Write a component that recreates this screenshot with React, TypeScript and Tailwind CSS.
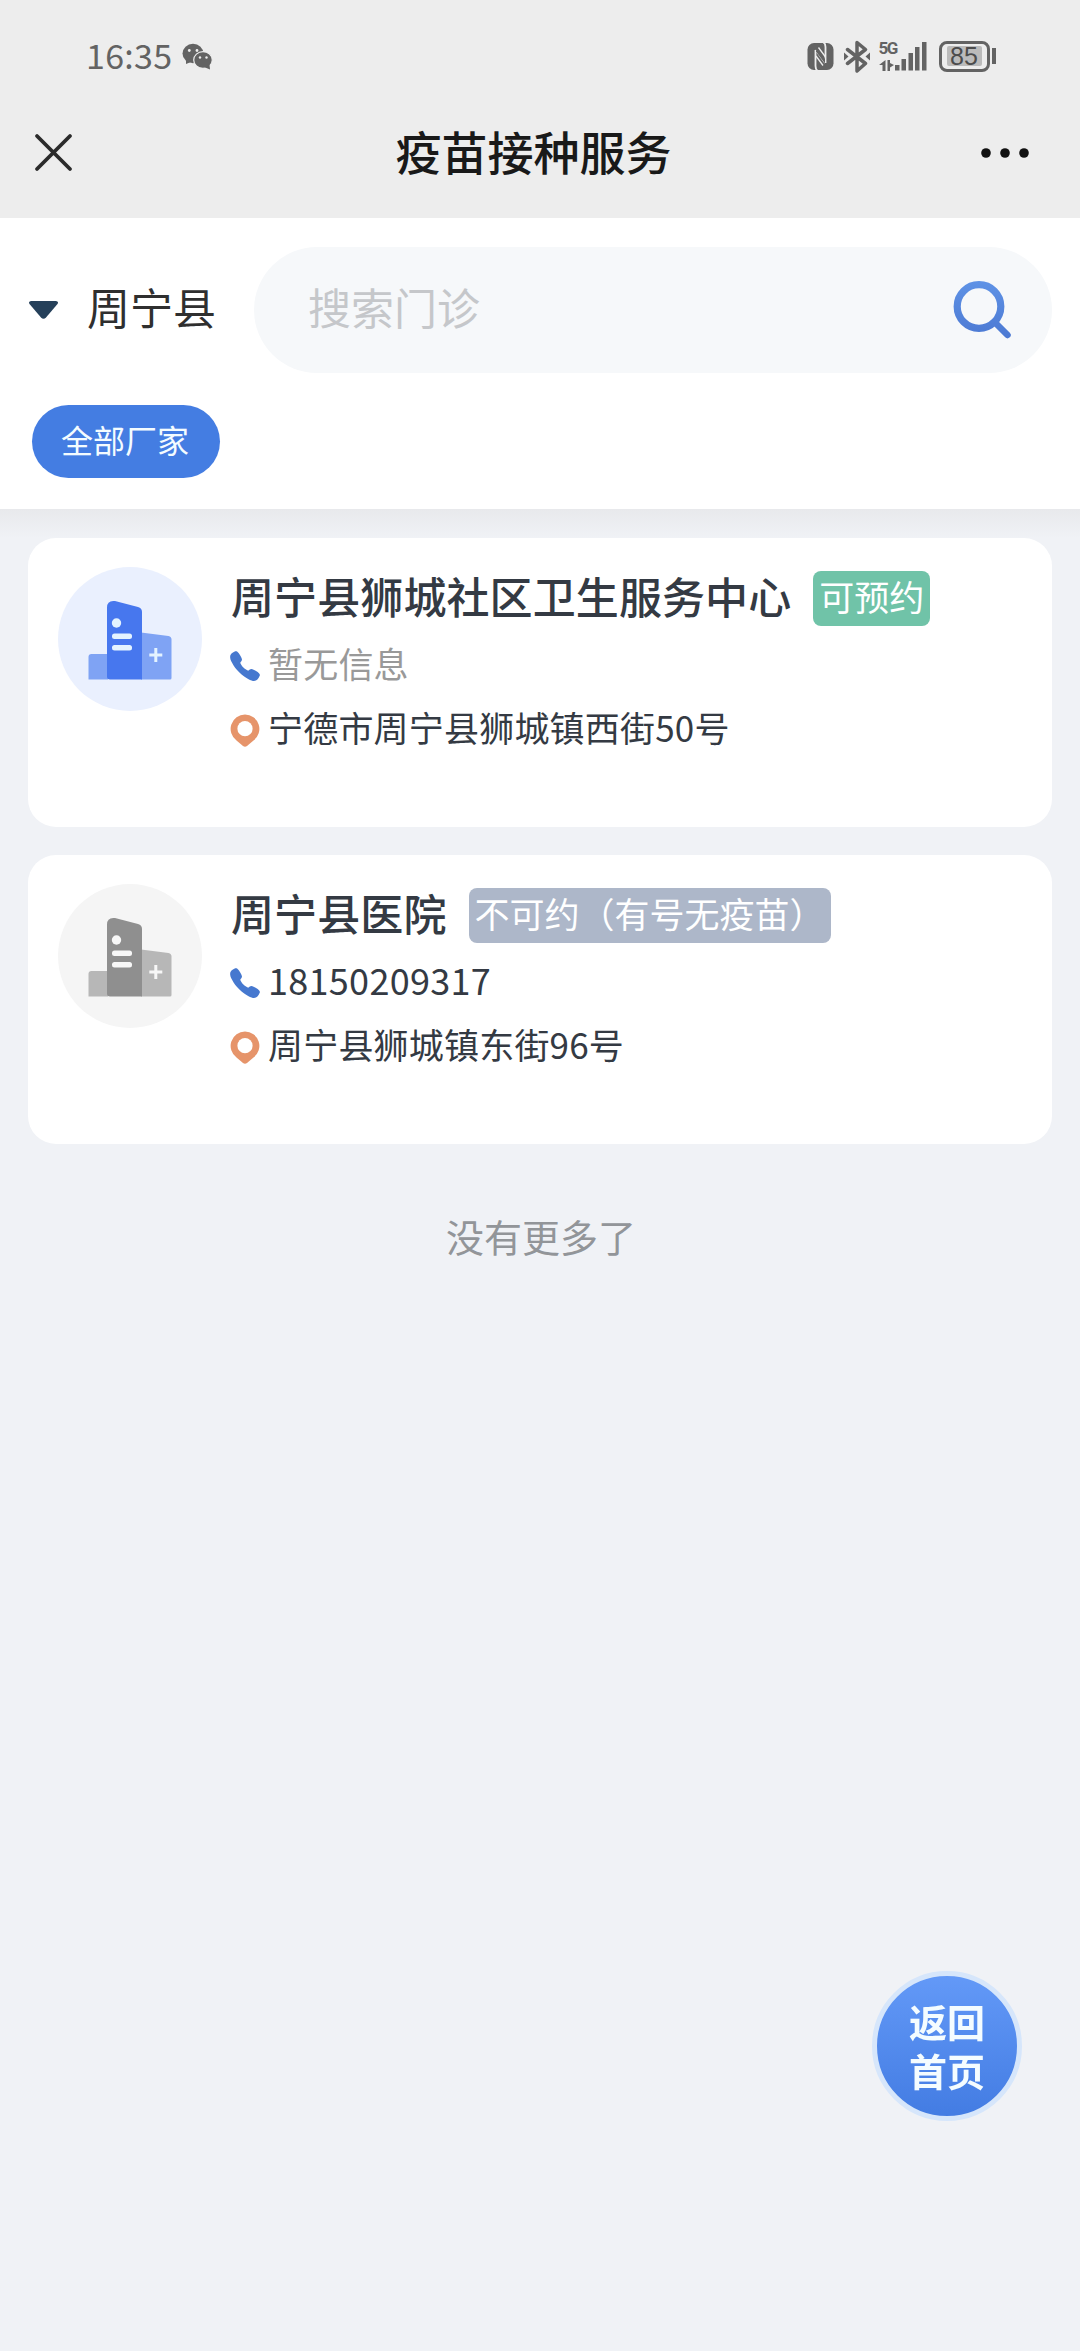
import React from "react";
import { IoCall } from "react-icons/io5";
import { clsx } from "clsx";

// --- CONTENT DATA ---
const clinics = [
  {
    name: "周宁县狮城社区卫生服务中心",
    status: "可预约",
    available: true,
    phone: "",
    address: "宁德市周宁县狮城镇西街50号",
  },
  {
    name: "周宁县医院",
    status: "不可约（有号无疫苗）",
    available: false,
    phone: "18150209317",
    address: "周宁县狮城镇东街96号",
  },
];

function WechatIcon() {
  return (
    <svg width="31" height="27" viewBox="0 0 31 27" fill="#636363">
      <ellipse cx="11" cy="10.500" rx="10.500" ry="9.700" />
      <path d="M4 16v5l5-2z" />
      <ellipse cx="21" cy="17" rx="9.300" ry="8.300" stroke="#ededed" strokeWidth="1.200" />
      <path d="M22 24l6 2.500-.5-5z" />
      <g fill="#ededed">
        <circle cx="7.300" cy="7.500" r="1.400" />
        <circle cx="15" cy="7.500" r="1.400" />
        <circle cx="18" cy="14.500" r="1.200" />
        <circle cx="24.500" cy="14.500" r="1.200" />
      </g>
    </svg>
  );
}

function StatusIcons() {
  return (
    <div className="flex items-center text-[#636363]">
      {/* NFC */}
      <svg width="27" height="29" viewBox="0 0 27 29" fill="#636363">
        <rect x=".5" y="1" width="26" height="27" rx="6.500" />
        <path
          d="M11 29c-2-1-2.500-3-2.500-5V8M16 0c2 1 2.500 3 2.500 5v16"
          fill="none"
          stroke="#ededed"
          strokeWidth="1.800"
        />
        <path
          d="M8.500 8l9.500 13M9 14l7 9.500M18.500 15l-7-9.500"
          fill="none"
          stroke="#ededed"
          strokeWidth="1.300"
        />
        <path d="M9 9.500l9 12V17L9.500 5.500z" />
      </svg>
      {/* Bluetooth */}
      <svg width="28" height="33" viewBox="0 0 28 33" className="ml-[9px]" fill="#636363">
        <path
          d="M4.500 9.500l18 14-8.500 7.500V2.500l8.500 7-18 14"
          fill="none"
          stroke="#636363"
          strokeWidth="3.500"
          strokeLinejoin="round"
          strokeLinecap="round"
        />
        <path d="M1 12.500l4.500 4-4.500 4zM27 12.500l-4.500 4 4.500 4z" />
      </svg>
      {/* Network */}
      <div className="ml-2 flex h-[30px] w-4 flex-col justify-between">
        <span className="font-['Roboto',sans-serif] text-[17px] leading-[14px] font-bold tracking-[-1.500px] whitespace-nowrap">
          5G
        </span>
        <svg width="15" height="11" viewBox="0 0 15 11" fill="#636363">
          <path d="M6.500 0v11h-3V5H0zM8.500 0h2.500v3l4 2-4 2.500V11H8.500z" />
        </svg>
      </div>
      <svg width="32" height="30" viewBox="0 0 32 30" fill="#636363">
        <rect x="0" y="24" width="4.500" height="5.500" />
        <rect x="6.500" y="18" width="4.500" height="11.500" />
        <rect x="13.500" y="12" width="4.500" height="17.500" />
        <rect x="20" y="6" width="4.500" height="23.500" />
        <rect x="27" y="1" width="4.500" height="28.500" />
      </svg>
      {/* Battery */}
      <div className="ml-3 flex h-[31px] w-[51px] items-center justify-center rounded-lg border-3 border-[#636363]">
        <span className="flex h-5 w-[35px] items-center justify-center rounded-xs bg-[#bbb] font-['Liberation_Sans',sans-serif] text-[25px] leading-none text-[#4c4c4c]">
          85
        </span>
      </div>
      <div className="ml-[2.500px] h-4 w-1 bg-[#636363]" />
    </div>
  );
}

function BuildingIcon({ available }: { available: boolean }) {
  return (
    <svg
      viewBox="0 0 144 144"
      className={clsx("size-36 shrink-0 rounded-full", available ? "bg-[#eaf0fe]" : "bg-[#f5f5f5]")}
    >
      <path d="M30.500 112.500V90q0-3 3-3H50v25.500z" fill={available ? "#7fa3f4" : "#b7b7b7"} />
      <path d="M83 65.500l27.500 3.500q3 .5 3 3.500v38.500q0 1.500-1.500 1.500H83z" fill={available ? "#7fa3f4" : "#b7b7b7"} />
      <path
        d="M49 40.500q0-7.500 8-6.500l23 6q4 1.200 4 5v67.500H52q-3 0-3-3z"
        fill={available ? "#4777ee" : "#8f8f8f"}
      />
      <g fill={available ? "#e4f3ff" : "#f7f7f7"}>
        <circle cx="58.500" cy="56" r="4.700" />
        <rect x="54" y="66.500" width="20" height="5.500" rx="2.500" />
        <rect x="54" y="78" width="20" height="5.500" rx="2.500" />
        <path d="M96.300 81h3v5.500h5v3h-5V95h-3v-5.500h-5v-3h5z" />
      </g>
    </svg>
  );
}

function PinIcon() {
  return (
    <svg viewBox="0 0 30 33" className="mt-0.5 h-[33px] w-[30px]">
      <path
        d="M15 .5a14.400 14.400 0 0 1 8.500 26L17 32q-2 1.500-4 0l-6.500-5.500A14.400 14.400 0 0 1 15 .5z"
        fill="#e6946a"
      />
      <circle cx="15" cy="14.700" r="7.600" fill="#fff" />
    </svg>
  );
}

export default function App() {
  return (
    <div className="flex min-h-[2351px] w-[1080px] flex-col bg-[#f0f2f6] font-['Noto_Sans_CJK_SC',sans-serif] text-[#343a43]">
      {/* Status bar + title bar */}
      <header className="h-[218px] bg-[#ededed]">
        <div className="flex h-[112px] items-center justify-between pr-[84px] pl-[86px] text-[#636363]">
          <div className="flex items-center gap-2.5">
            <span className="pb-0.5 text-[34px] leading-none tracking-[0.3px]">16:35</span>
            <WechatIcon />
          </div>
          <StatusIcons />
        </div>
        <div className="flex h-20 items-center justify-between pt-px pr-[51px] pl-[34px]">
          <svg width="39" height="39" viewBox="0 0 39 39" stroke="#2b2b2b" strokeWidth="3.800" strokeLinecap="round">
            <path d="M3 3l33 33M36 3L3 36" />
          </svg>
          <h1 className="pb-[5px] pl-[13px] text-[46px] leading-none font-medium text-[#191919]">疫苗接种服务</h1>
          <svg width="48" height="10" viewBox="0 0 48 10" fill="#111">
            <circle cx="5" cy="5" r="4.800" />
            <circle cx="24" cy="5" r="4.800" />
            <circle cx="43" cy="5" r="4.800" />
          </svg>
        </div>
      </header>

      {/* Filters */}
      <section className="h-[291px] bg-white pt-[29px] pr-7 pl-7">
        <div className="flex items-center">
          <svg width="31" height="20" viewBox="0 0 31 20" fill="#25405a">
            <path d="M3 1h25q3 .5 1.500 3L18 17.500q-2.500 2.500-5 0L1.500 4Q0 1.500 3 1z" />
          </svg>
          <span className="ml-7 pb-[7px] text-[43px] leading-none text-[#2f2f2f]">周宁县</span>
          <div className="ml-[38px] flex h-[126px] flex-1 items-center justify-between rounded-full bg-[#f6f8fa] pr-10 pl-[54px]">
            <span className="pb-[7px] text-[43px] leading-none text-[#c5c7ca]">搜索门诊</span>
            <svg width="60" height="60" viewBox="0 0 60 60" fill="none" stroke="url(#lens)" strokeLinecap="round">
              <defs>
                <linearGradient id="lens" x1="0" y1="0" x2="0" y2="60" gradientUnits="userSpaceOnUse">
                  <stop stopColor="#5f93e6" />
                  <stop offset="1" stopColor="#4b78d2" />
                </linearGradient>
              </defs>
              <circle cx="27" cy="26.500" r="21.800" strokeWidth="7.200" />
              <path d="M43.500 43L55.500 55" strokeWidth="6.500" />
            </svg>
          </div>
        </div>
        <button className="mt-8 ml-1 flex h-[73px] w-[188px] items-center justify-center rounded-full bg-[#447de2] pr-0.5 pb-[5px] text-[32px] leading-none text-[#f4fcff]">
          全部厂家
        </button>
      </section>
      <div className="h-[29px] bg-linear-to-b from-[#e8e9ec] to-[#f0f2f6]" />

      {/* Clinic list */}
      <main className="flex flex-col gap-7 px-7">
        {clinics.map((item) => (
          <article key={item.name} className="flex h-[289px] gap-7 rounded-[28px] bg-white pt-[29px] pl-[30px]">
            <BuildingIcon available={item.available} />
            <div className="pt-1">
              <div className="flex h-[55px] items-center gap-[22px]">
                <h2 className="pb-[7px] pl-px text-[43px] leading-none font-medium tracking-[0.1px]">{item.name}</h2>
                <span
                  className={clsx(
                    "h-[55px] rounded-lg px-1.5 text-[35px] leading-[50px] text-white",
                    item.available ? "bg-[#70c3a8]" : "bg-[#adb7c9]"
                  )}
                >
                  {item.status}
                </span>
              </div>
              <div className="mt-[18px] flex h-[42px] items-center gap-2">
                <IoCall className="mt-0.5 size-[34px] -mx-0.5 text-[#4678cf]" />
                {item.phone ? (
                  <span className="pb-1.5 text-[36px] leading-none tracking-[0.3px]">{item.phone}</span>
                ) : (
                  <span className="pb-[5px] text-[35px] leading-none tracking-[0.2px] text-[#999]">暂无信息</span>
                )}
              </div>
              <div className="mt-[22px] flex h-[42px] items-center gap-2">
                <PinIcon />
                <span className="pb-[5px] text-[35px] leading-none tracking-[0.2px]">{item.address}</span>
              </div>
            </div>
          </article>
        ))}
      </main>

      <p className="mt-[73px] pl-0.5 text-center text-[38px] leading-none text-[#929599]">没有更多了</p>

      {/* Floating home button */}
      <button className="fixed right-[58px] bottom-[230px] flex size-[150px] items-center justify-center rounded-full border-[5px] border-[#d6e6fb] bg-linear-to-b from-[#649af8] to-[#427be2] bg-origin-border pb-0.5 text-[38px] leading-[49px] font-bold text-[#f4fcff]">
        <span className="w-20">返回首页</span>
      </button>
    </div>
  );
}
